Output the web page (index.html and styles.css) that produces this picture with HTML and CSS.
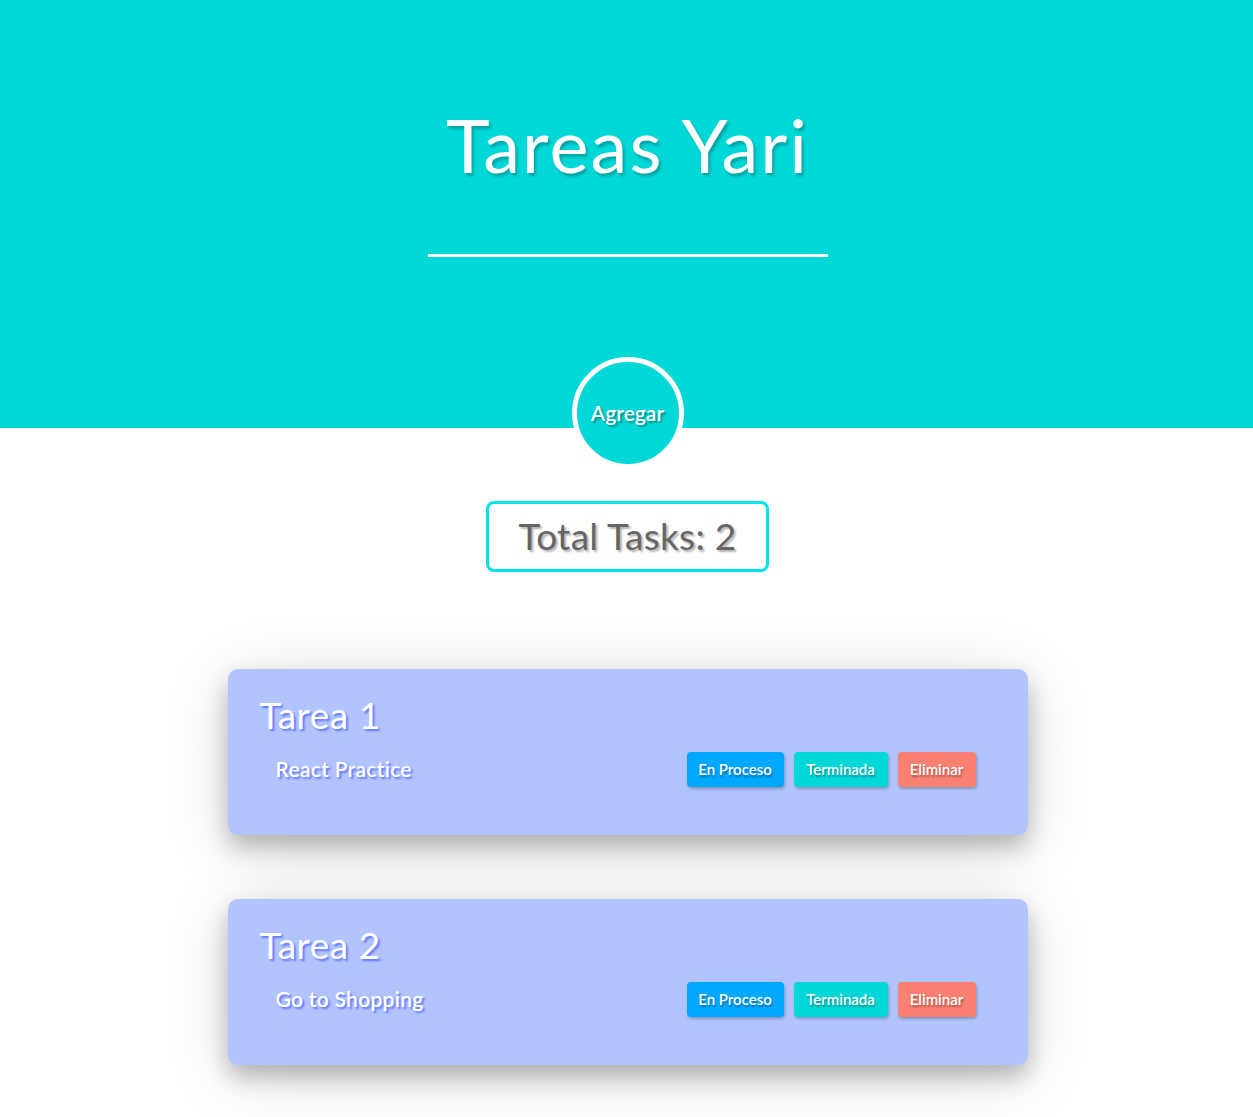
FILE: index.html
```html
<!DOCTYPE html>
<html lang="es">
<head>
<meta charset="utf-8">
<title>Tareas Yari</title>
<link rel="stylesheet" href="styles.css">
</head>
<body>
<header class="hero">
  <h1 class="hero-title">Tareas Yari</h1>
  <div class="hero-line"></div>
  <button class="add-circle">Agregar</button>
</header>
<main class="content">
  <div class="total">Total Tasks: 2</div>
  <section class="card">
    <h2 class="card-title">Tarea 1</h2>
    <div class="card-row">
      <p class="card-desc">React Practice</p>
      <div class="actions">
        <button class="btn btn-process">En Proceso</button>
        <button class="btn btn-done">Terminada</button>
        <button class="btn btn-delete">Eliminar</button>
      </div>
    </div>
  </section>
  <section class="card">
    <h2 class="card-title">Tarea 2</h2>
    <div class="card-row">
      <p class="card-desc">Go to Shopping</p>
      <div class="actions">
        <button class="btn btn-process">En Proceso</button>
        <button class="btn btn-done">Terminada</button>
        <button class="btn btn-delete">Eliminar</button>
      </div>
    </div>
  </section>
</main>
</body>
</html>
```

FILE: styles.css
```css
* { box-sizing: border-box; }
html, body { margin: 0; padding: 0; }
body {
  background: #ffffff;
  font-family: "Lato", "Noto Sans", "DejaVu Sans", sans-serif;
  color: #ffffff;
}
.hero {
  background: #00d8d8;
  display: flex;
  flex-direction: column;
  align-items: center;
  padding-top: 100px;
  padding-left: 2px;
}
.hero-title {
  margin: 0;
  font-size: 74px;
  line-height: 90px;
  font-weight: 400;
  letter-spacing: 2px;
  color: #ffffff;
  text-shadow: 2px 3px 3px rgba(0, 0, 0, 0.25);
}
.hero-line {
  margin-top: 64px;
  width: 400px;
  height: 3px;
  background: #ffffff;
}
.add-circle {
  margin-top: 100px;
  margin-bottom: -41px;
  width: 112px;
  height: 112px;
  border-radius: 50%;
  border: 5px solid #ffffff;
  background: #00d8d8;
  color: #ffffff;
  font-family: inherit;
  font-size: 21px;
  font-weight: 600;
  padding: 0 0 2px 0;
  text-shadow: 2px 2px 2px rgba(0, 0, 0, 0.35);
  position: relative;
  z-index: 1;
}
.content {
  display: flex;
  flex-direction: column;
  align-items: center;
  padding-top: 73px;
  padding-left: 2px;
}
.total {
  width: 283px;
  height: 71px;
  border: 3px solid #00e3e8;
  border-radius: 8px;
  display: flex;
  align-items: center;
  justify-content: center;
  color: #666666;
  font-size: 37px;
  letter-spacing: 0.3px;
  padding-bottom: 3px;
  text-shadow: 2px 2px 2px rgba(0, 0, 0, 0.3);
  margin-bottom: 97px;
}
.card {
  width: 800px;
  background: #b2c4fd;
  border-radius: 10px;
  padding: 24px 52px 48px 32px;
  margin-bottom: 64px;
  box-shadow: 0 12px 22px rgba(0, 0, 0, 0.24), 0 10px 70px rgba(0, 0, 0, 0.14);
}
.card-title {
  margin: 0;
  font-size: 37px;
  line-height: 44px;
  font-weight: 400;
  letter-spacing: 0.5px;
  color: #ffffff;
  text-shadow: 2px 2px 2px #6479ff;
}
.card-row {
  margin-top: 15px;
  display: flex;
  align-items: center;
  justify-content: space-between;
  height: 35px;
}
.card-desc {
  margin: 0 0 0 16px;
  font-size: 21px;
  font-weight: 600;
  letter-spacing: 0.3px;
  color: #ffffff;
  padding-bottom: 3px;
  text-shadow: 2px 2px 2px #6479ff;
}
.actions {
  display: flex;
  gap: 10px;
}
.btn {
  height: 35px;
  border: none;
  border-radius: 4px;
  padding: 0 0 2px 0;
  font-family: inherit;
  font-size: 15px;
  font-weight: 600;
  color: #ffffff;
  text-shadow: 1px 2px 2px rgba(0, 0, 0, 0.35);
  box-shadow: 1px 2px 3px rgba(0, 0, 0, 0.25);
}
.btn-process { background: #00a8ff; width: 97px; }
.btn-done { background: #00d8d8; width: 94px; }
.btn-delete { background: #fa8072; width: 78px; }
```
